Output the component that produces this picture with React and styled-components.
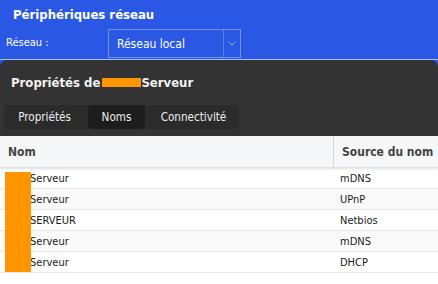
import React from "react";
import styled, { createGlobalStyle } from "styled-components";

const Global = createGlobalStyle`
  html, body { margin: 0; padding: 0; background: #ffffff; }
  body { font-family: "DejaVu Sans Condensed", "DejaVu Sans", sans-serif; width: 438px; height: 284px; overflow: hidden; }
`;

const Page = styled.div`
  background: #2a58e4;
  display: flex;
  flex-direction: column;
`;

const Header = styled.header`
  height: 60px;
  display: flex;
  flex-direction: column;
  padding: 0 0 0 6px;
  box-sizing: border-box;
  border-bottom: 1px solid #a9bdf2;
`;

const Title = styled.h1`
  margin: 0;
  padding: 5px 0 0 7px;
  font-size: 13px;
  font-weight: bold;
  color: #ffffff;
  line-height: 20px;
`;

const FormRow = styled.div`
  display: flex;
  align-items: center;
  margin-top: 4px;
`;

const Label = styled.label`
  width: 102px;
  font-size: 11px;
  color: #ffffff;
  margin-top: -3px;
`;

const Select = styled.div`
  width: 133px;
  height: 29px;
  box-sizing: border-box;
  border: 1px solid #7393f1;
  display: flex;
  align-items: stretch;
  color: #ffffff;
  font-size: 12px;
`;

const SelectValue = styled.div`
  flex: 1;
  display: flex;
  align-items: center;
  padding-left: 8px;
`;

const SelectArrow = styled.div`
  width: 16px;
  border-left: 1px solid #5a7fee;
  display: flex;
  align-items: center;
  justify-content: center;
`;

const Panel = styled.section`
  background: #333333;
  border-top-left-radius: 7px;
  border-top-right-radius: 7px;
  display: flex;
  flex-direction: column;
`;

const PanelTitle = styled.h2`
  margin: 0;
  padding: 13px 0 0 11px;
  height: 31px;
  box-sizing: border-box;
  font-size: 13px;
  font-weight: bold;
  color: #f2f2f2;
  display: flex;
  align-items: center;
`;

const Redact = styled.span`
  display: inline-block;
  width: ${(p) => p.$w}px;
  height: ${(p) => p.$h}px;
  background: #ff9500;
  margin-left: ${(p) => p.$ml || 0}px;
`;

const Tabs = styled.div`
  margin: 14px 0 7px 4px;
  display: flex;
  gap: 3px;
  align-self: flex-start;
  background: #2b2b2b;
  border-radius: 3px;
`;

const Tab = styled.div`
  height: 24px;
  width: ${(p) => p.$w}px;
  display: flex;
  align-items: center;
  justify-content: center;
  font-size: 11.6px;
  color: #ececec;
  background: ${(p) => (p.$active ? "#1d1d1d" : "#2b2b2b")};
  border-radius: 3px;
`;

const Table = styled.div`
  background: #ffffff;
  display: flex;
  flex-direction: column;
  position: relative;
  height: 147px;
`;

const HeadRow = styled.div`
  display: grid;
  grid-template-columns: 333px 1fr;
  height: 32px;
  background: #f6f7f9;
  box-shadow: 0 1px 2px rgba(0, 0, 0, 0.12);
  border-bottom: 1px solid #e2e2e2;
  box-sizing: border-box;
  position: relative;
  z-index: 1;
`;

const HeadCell = styled.div`
  display: flex;
  align-items: center;
  padding-left: ${(p) => p.$pl}px;
  font-size: 12px;
  font-weight: bold;
  color: #444444;
  border-left: ${(p) => (p.$divider ? "1px solid #d6d6d6" : "none")};
`;

const Row = styled.div`
  display: grid;
  grid-template-columns: 333px 1fr;
  height: 21px;
  box-sizing: border-box;
  border-bottom: 1px solid #e6e6e6;
  background: ${(p) => (p.$alt ? "#fafafa" : "#ffffff")};
  font-size: 11px;
  color: #1a1a1a;
`;

const Cell = styled.div`
  display: flex;
  align-items: center;
  padding-left: ${(p) => p.$pl}px;
`;

const Block = styled.div`
  position: absolute;
  left: 5px;
  top: 36px;
  width: 26px;
  height: 100px;
  background: #ff9500;
  z-index: 2;
`;

const Chevron = () => (
  <svg width="8" height="5" viewBox="0 0 8 5" fill="none">
    <path d="M0.5 0.5l3.5 3.5L7.5 0.5" stroke="#9fb4f5" strokeWidth="1" />
  </svg>
);

const rows = [
  ["Serveur", "mDNS"],
  ["Serveur", "UPnP"],
  ["SERVEUR", "Netbios"],
  ["Serveur", "mDNS"],
  ["Serveur", "DHCP"],
];

export default function App() {
  return (
    <>
      <Global />
      <Page>
        <Header>
          <Title>Périphériques réseau</Title>
          <FormRow>
            <Label>Réseau :</Label>
            <Select>
              <SelectValue>Réseau local</SelectValue>
              <SelectArrow>
                <Chevron />
              </SelectArrow>
            </Select>
          </FormRow>
        </Header>
        <Panel>
          <PanelTitle>
            Propriétés de&nbsp;<Redact $w={39} $h={9} $ml={-2} />Serveur
          </PanelTitle>
          <Tabs>
            <Tab $w={81}>Propriétés</Tab>
            <Tab $w={57} $active>Noms</Tab>
            <Tab $w={91}>Connectivité</Tab>
          </Tabs>
          <Table>
            <HeadRow>
              <HeadCell $pl={8}>Nom</HeadCell>
              <HeadCell $pl={8} $divider>Source du nom</HeadCell>
            </HeadRow>
            {rows.map(([n, s], i) => (
              <Row key={i} $alt={i % 2 === 1}>
                <Cell $pl={30}>{n}</Cell>
                <Cell $pl={7}>{s}</Cell>
              </Row>
            ))}
            <Block />
          </Table>
        </Panel>
      </Page>
    </>
  );
}
